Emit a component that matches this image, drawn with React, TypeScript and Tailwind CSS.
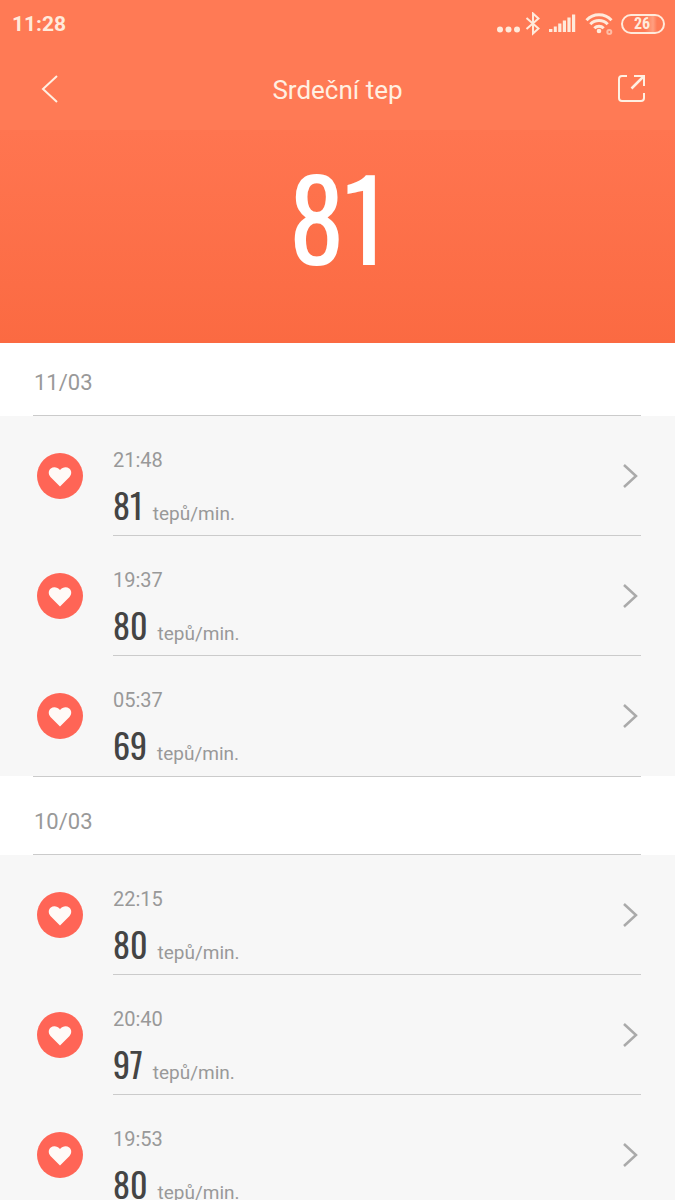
type Reading = { time: string; bpm: number };
type Day = { date: string; readings: Reading[] };

const days: Day[] = [
  {
    date: "11/03",
    readings: [
      { time: "21:48", bpm: 81 },
      { time: "19:37", bpm: 80 },
      { time: "05:37", bpm: 69 },
    ],
  },
  {
    date: "10/03",
    readings: [
      { time: "22:15", bpm: 80 },
      { time: "20:40", bpm: 97 },
      { time: "19:53", bpm: 80 },
    ],
  },
];

function StatusBar() {
  return (
    <div className="flex h-12 items-center justify-between pr-2.5 pl-3 text-[#ffeadb]">
      <span className="text-[21px] leading-6 font-bold">11:28</span>
      <div className="flex items-center">
        <svg className="h-6 w-6" viewBox="0 0 24 24" fill="currentColor" aria-hidden="true">
          <circle cx="3" cy="17.500" r="3" />
          <circle cx="11.500" cy="17.500" r="3" />
          <circle cx="20" cy="17.500" r="3" />
        </svg>
        <svg className="ml-1 h-6 w-4" viewBox="0 0 16 24" fill="none" stroke="currentColor" strokeWidth="2" aria-hidden="true">
          <path d="M1.500 6 13.500 16.500 8 21.500V1.500L13.500 6.500 1.500 17" />
        </svg>
        <svg className="ml-2 h-6 w-7" viewBox="0 0 28 24" fill="currentColor" aria-hidden="true">
          <rect x="0" y="17" width="3.4" height="3" />
          <rect x="4.8" y="14.5" width="3" height="5.5" />
          <rect x="9.2" y="11.5" width="3.2" height="8.5" />
          <rect x="13.8" y="8.5" width="3.2" height="11.500" />
          <rect x="18.4" y="5.5" width="3.2" height="14.500" />
          <rect x="23" y="2.5" width="3.2" height="17.500" />
        </svg>
        <svg className="ml-2 h-6 w-7" viewBox="0 0 28 24" fill="none" stroke="currentColor" strokeWidth="3" aria-hidden="true">
          <path d="M1.500 8.200C8.500 1 19.500 1 26.500 8.200" />
          <path d="M5.300 12.300C10.200 7.300 17.800 7.300 22.700 12.300" />
          <path d="M9.300 16.200C12 13.500 16 13.500 18.700 16.200" />
          <circle cx="14" cy="19" r="2.300" fill="currentColor" stroke="none" />
          <circle cx="24.300" cy="20" r="2" strokeWidth="2" opacity="0.6" />
        </svg>
        <span className="ml-2 flex h-5 w-11 items-center justify-center rounded-full border-2 border-current bg-linear-to-r from-transparent from-55% via-[#ff9f80] via-75% to-transparent to-85% pr-0.5 font-[Roboto_Condensed,Roboto,sans-serif] text-[16px] leading-4 font-bold">
          26
        </span>
      </div>
    </div>
  );
}

function TitleBar() {
  return (
    <div className="grid h-[82px] grid-cols-[1fr_auto_1fr] items-center px-7 text-[#fff0e2]">
      <button type="button" aria-label="Zpět" className="flex size-11 items-center justify-center">
        <svg className="h-8 w-5" viewBox="0 0 20 32" fill="none" stroke="currentColor" strokeWidth="2" aria-hidden="true">
          <path d="M17 3 3 16 17 29" />
        </svg>
      </button>
      <h1 className="pt-0.5 text-[26px] leading-8 font-normal">Srdeční tep</h1>
      <button type="button" aria-label="Sdílet" className="flex size-8 items-center justify-center justify-self-end">
        <svg className="size-8" viewBox="0 0 32 32" fill="none" stroke="currentColor" strokeWidth="2" aria-hidden="true">
          <path d="M12 3H7a3 3 0 0 0-3 3v19a3 3 0 0 0 3 3h19a3 3 0 0 0 3-3v-5" />
          <path d="M19 3h10v10" />
          <path d="M29 3 16.500 15.500" strokeWidth="2.500" />
        </svg>
      </button>
    </div>
  );
}

function ReadingRow({ time, bpm, last }: Reading & { last: boolean }) {
  return (
    <li>
      <a href="#detail" className="flex h-[120px] pr-[34px] pl-[37px]">
        <span className="mt-[37px] mr-[30px] flex size-[46px] shrink-0 items-center justify-center rounded-full bg-[#ff6556]">
          <svg className="size-6" viewBox="0 0 24 24" fill="#fffaf7" aria-hidden="true">
            <path d="M12 22.500 2.500 13C0 10 .3 6.300 2.800 4.500c2.700-2 6.500-1.600 9.200 1.500C14.700 2.900 18.500 2.500 21.200 4.500c2.500 1.800 2.800 5.500.3 8.500Z" />
          </svg>
        </span>
        <span className={`flex flex-1 items-start justify-between border-b ${last ? "border-transparent" : "border-[#cbcbcb]"}`}>
          <span className="flex flex-col pt-8">
            <span className="text-xl leading-6 text-[#999999]">{time}</span>
            <span className="mt-3 flex items-baseline gap-2.5">
              <span className="font-[Oswald,'Roboto_Condensed','Liberation_Sans_Narrow',sans-serif] text-[34px] leading-[42px] text-[#444444]">
                {bpm}
              </span>
              <span className="text-[19px] leading-6 text-[#999999]">tepů/min.</span>
            </span>
          </span>
          <svg className="mt-[46px] h-7 w-5" viewBox="0 0 20 28" fill="none" stroke="#aaaaaa" strokeWidth="2.500" aria-hidden="true">
            <path d="M3 3 15 14 3 25" />
          </svg>
        </span>
      </a>
    </li>
  );
}

export default function App() {
  return (
    <main className="h-screen overflow-hidden bg-[#f7f7f7] font-[Roboto,sans-serif]">
      <header className="bg-[#ff7a55]">
        <StatusBar />
        <TitleBar />
        <div className="flex h-[213px] justify-center bg-linear-to-b from-[#ff7550] to-[#fb6a42] pt-4">
          <span className="font-[Oswald,'Roboto_Condensed','Liberation_Sans_Narrow',sans-serif] text-[110px] leading-[140px] font-normal text-white tabular-nums">
            81
          </span>
        </div>
      </header>
      {days.map((day, index) => (
        <section key={day.date}>
          <div className="bg-white pr-[34px] pl-[33px]">
            <h2
              className={`border-b border-[#cbcbcb] pb-[18px] pl-px text-[22px] leading-7 font-normal text-[#999999] ${
                index > 0 ? "border-t pt-[31px]" : "pt-[26px]"
              }`}
            >
              {day.date}
            </h2>
          </div>
          <ul>
            {day.readings.map((reading, i) => (
              <ReadingRow key={reading.time} {...reading} last={i === day.readings.length - 1} />
            ))}
          </ul>
        </section>
      ))}
    </main>
  );
}
